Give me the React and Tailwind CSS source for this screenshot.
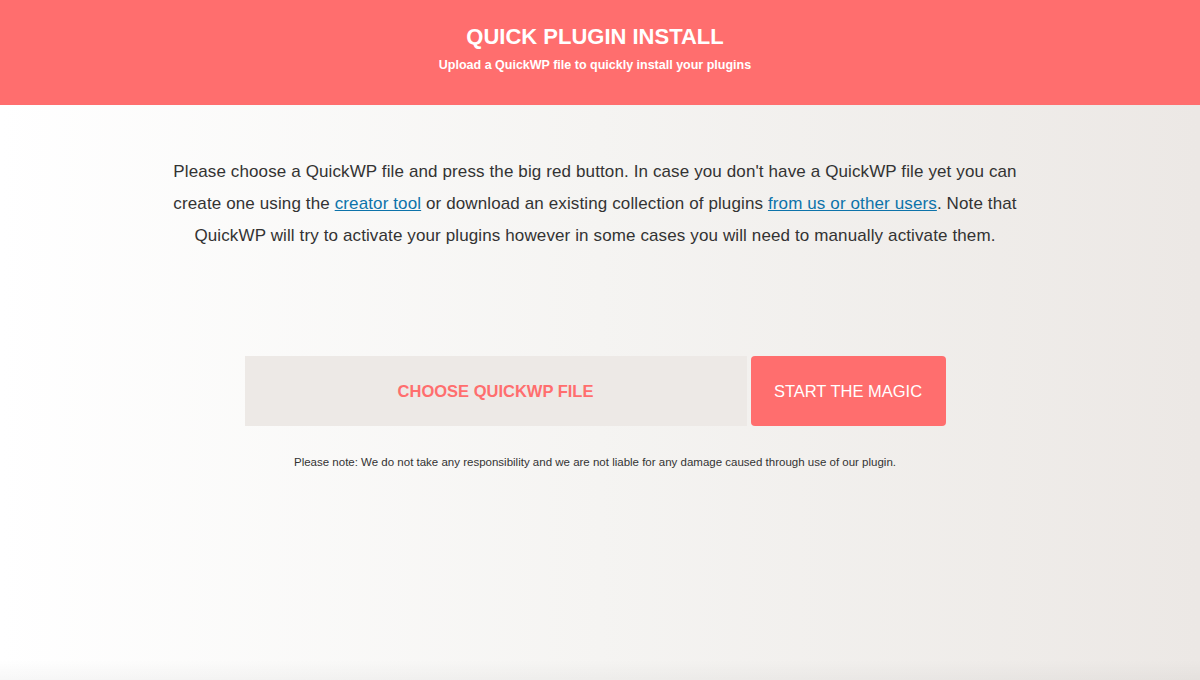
import React from "react";

const App = () => {
  return (
    <div
      className="relative min-h-[680px] w-full bg-gradient-to-r from-[#ffffff] via-[#f5f4f2] to-[#ece8e5] text-[#333333]"
      style={{ fontFamily: '"Liberation Sans", Arial, sans-serif' }}
    >
      <header className="flex h-[105px] flex-col items-center bg-[#ff6e6e] pr-[10px] pt-[23px] text-white">
        <h1 className="text-[22px] font-bold leading-[28px]">QUICK PLUGIN INSTALL</h1>
        <p className="mt-[6px] text-[12.5px] font-bold leading-[16px]">
          Upload a QuickWP file to quickly install your plugins
        </p>
      </header>

      <main className="flex flex-col items-center pr-[10px]">
        <p className="mt-[51px] w-[860px] text-center text-[17px] leading-[32px] tracking-[0.12px]">
          Please choose a QuickWP file and press the big red button. In case you don't have a QuickWP file yet
          you can create one using the{" "}
          <a href="#" className="text-[#0d73aa] underline">
            creator tool
          </a>{" "}
          or download an existing collection of plugins{" "}
          <a href="#" className="text-[#0d73aa] underline">
            from us or other users
          </a>
          . Note that QuickWP will try to activate your plugins however in some cases you will need to manually
          activate them.
        </p>

        <div className="mt-[104px] flex gap-[4px]">
          <label className="flex h-[70px] w-[502px] cursor-pointer items-center justify-center bg-[#ede9e6] text-[16.5px] font-bold text-[#ff6e6e]">
            CHOOSE QUICKWP FILE
          </label>
          <button className="h-[70px] w-[195px] rounded-[4px] bg-[#ff6e6e] text-[16.5px] text-white">
            START THE MAGIC
          </button>
        </div>

        <p className="mt-[29px] text-[11.5px] leading-[14px] text-[#333333]">
          Please note: We do not take any responsibility and we are not liable for any damage caused through use
          of our plugin.
        </p>
      </main>

      <div className="absolute bottom-0 left-0 h-[20px] w-full bg-gradient-to-b from-transparent to-[#00000008]" />
    </div>
  );
};

export default App;
